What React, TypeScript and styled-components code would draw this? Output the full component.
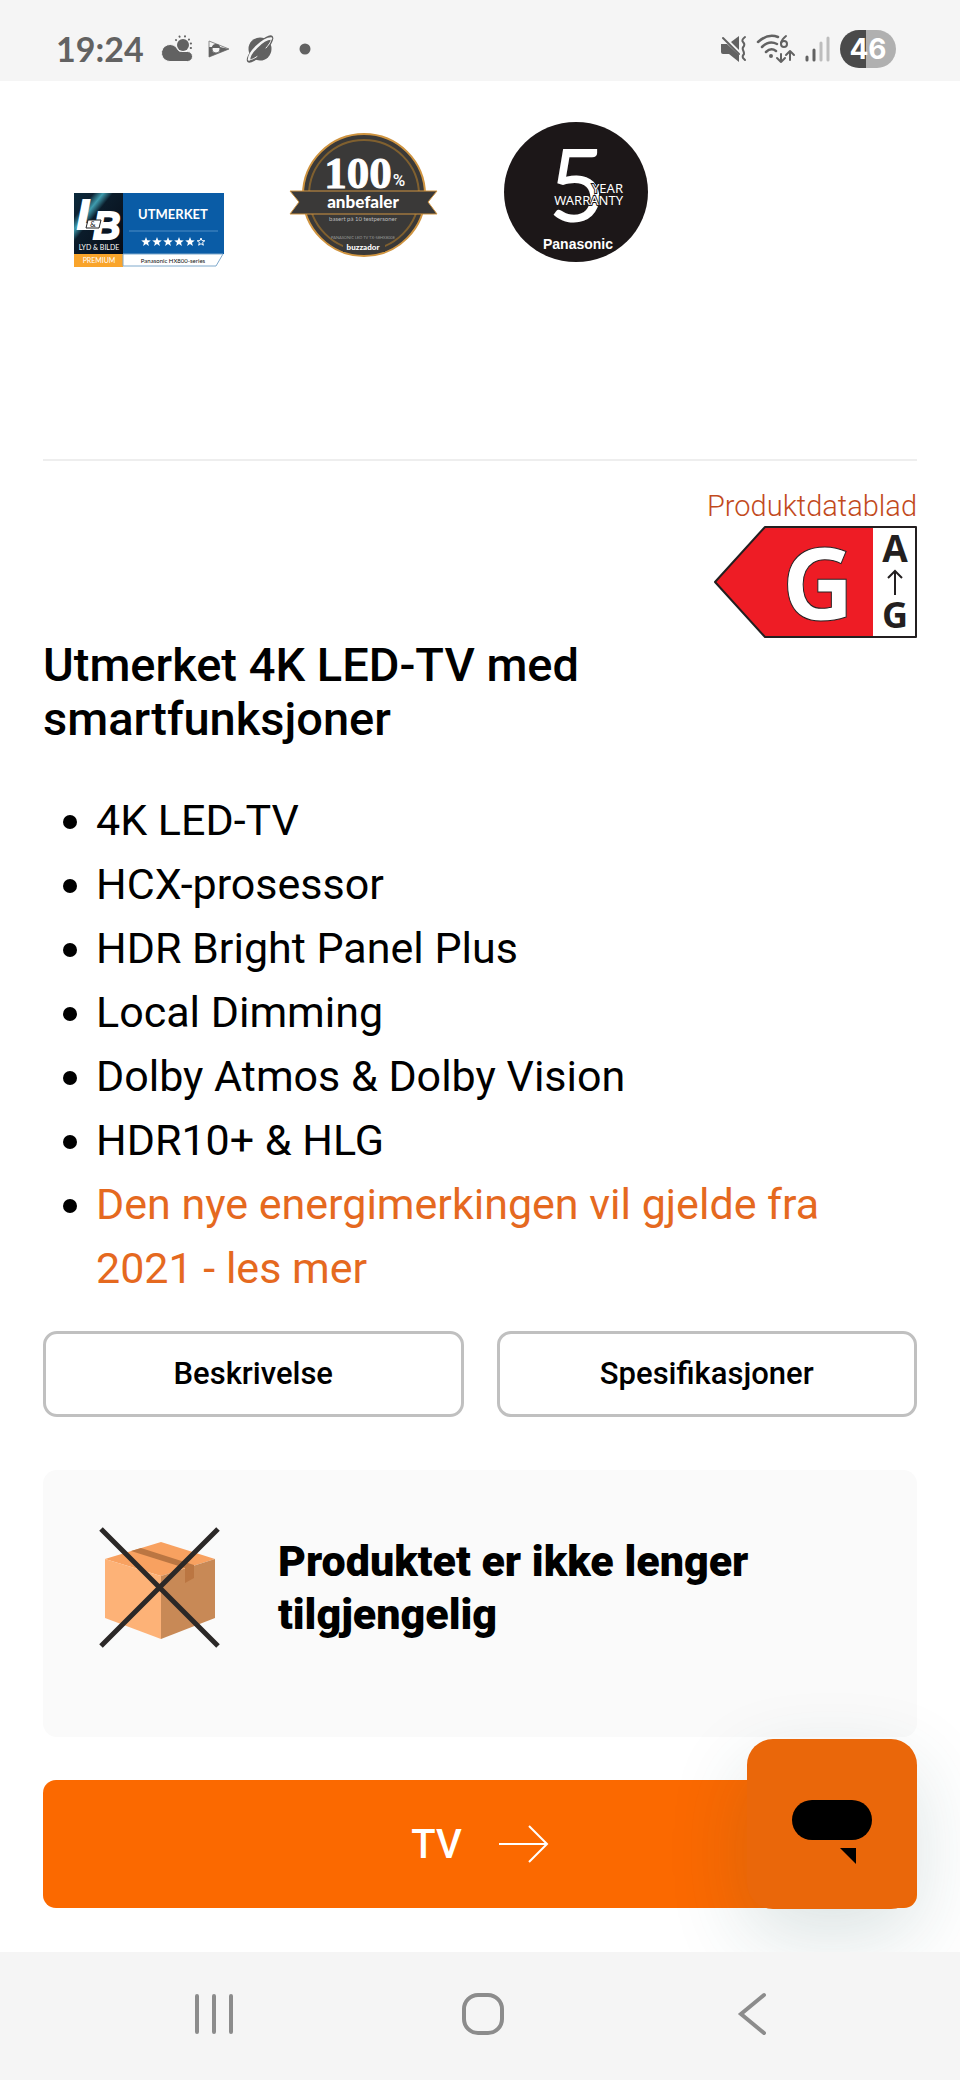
import React from "react";
import styled, { createGlobalStyle } from "styled-components";

const GlobalStyle = createGlobalStyle`
  * { box-sizing: border-box; }
  body {
    margin: 0;
    background: #fff;
    color: #000;
    font-family: Roboto, "Liberation Sans", sans-serif;
  }
  svg { display: block; flex: none; overflow: visible; }
`;

const Screen = styled.div`
  display: flex;
  flex-direction: column;
  min-height: 100vh;
`;

const StatusBar = styled.header`
  display: flex;
  align-items: center;
  justify-content: space-between;
  padding: 16px 64px 0 56px;
  height: 81px;
  background: #f5f5f5;
  color: #626262;
`;

const StatusGroup = styled.div<{ $gap: number }>`
  display: flex;
  align-items: center;
  gap: ${(p) => p.$gap}px;
`;

const Clock = styled.time`
  font: 700 34px/40px Lato, sans-serif;
  margin-right: 4px;
`;

const Battery = styled.span`
  display: flex;
  align-items: center;
  justify-content: center;
  width: 56px;
  height: 38px;
  border-radius: 19px;
  background: linear-gradient(90deg, #4a4a4a 46%, #b0b0b0 46%);
  color: #fff;
  font: 700 28px/38px Inter, sans-serif;
`;

const Main = styled.main`
  position: relative;
  flex: 1;
  padding: 0 43px 44px;
  overflow: hidden;
`;

const Badges = styled.section`
  display: flex;
  gap: 64px;
  padding: 37px 31px 191px;
  border-bottom: 2px solid #eee;
`;

const Energy = styled.section`
  display: flex;
  flex-direction: column;
  align-items: flex-end;
  gap: 2px;
  padding-top: 27px;
`;

const SheetLink = styled.a`
  color: #c24a1d;
  font-size: 29px;
  line-height: 36px;
  font-weight: 300;
  text-decoration: none;
`;

const Title = styled.h1`
  max-width: 640px;
  margin: 0 0 42px;
  font-size: 47px;
  line-height: 54px;
  font-weight: 500;
`;

const Features = styled.ul`
  margin: 0 0 31px;
  padding: 0;
  list-style: none;
  font-size: 43px;
  line-height: 64px;
  font-weight: 400;
`;

const Feature = styled.li`
  display: flex;
  gap: 19px;
  padding-left: 20px;

  &::before {
    content: "";
    flex: none;
    width: 14px;
    height: 14px;
    margin-top: 27px;
    border-radius: 50%;
    background: #000;
  }
`;

const FeatureLink = styled.a`
  max-width: 800px;
  color: #e5691f;
  text-decoration: none;
`;

const Tabs = styled.div`
  display: grid;
  grid-template-columns: 1fr 1fr;
  gap: 33px;
`;

const TabButton = styled.button`
  height: 86px;
  border: 3px solid #c0c0c0;
  border-radius: 14px;
  background: #fff;
  color: #000;
  font: 500 31px/40px Roboto, sans-serif;
`;

const Notice = styled.section`
  display: flex;
  align-items: center;
  gap: 58px;
  margin: 53px 0 43px;
  padding: 57px 57px 89px;
  border-radius: 14px;
  background: #fafafa;
`;

const NoticeText = styled.p`
  max-width: 520px;
  margin: 0;
  font-size: 43px;
  line-height: 53px;
  font-weight: 900;
`;

const CategoryButton = styled.button`
  display: flex;
  align-items: center;
  justify-content: center;
  gap: 37px;
  width: 100%;
  height: 128px;
  padding: 0;
  border: 0;
  border-radius: 13px;
  background: #fb6900;
  color: #fff;
  font: 500 40px/53px Roboto, sans-serif;
`;

const ChatButton = styled.button`
  position: absolute;
  right: 43px;
  bottom: 43px;
  display: grid;
  place-items: center;
  width: 170px;
  height: 170px;
  padding: 16px 0 0;
  border: 0;
  border-radius: 26px;
  background: #ea670a;
  box-shadow: 0 28px 80px rgba(30, 80, 80, 0.16);
`;

const NavBar = styled.nav`
  display: flex;
  align-items: center;
  justify-content: space-between;
  height: 128px;
  padding: 0 186px 4px 192px;
  background: #f5f5f5;
`;

const NavButton = styled.button`
  display: grid;
  place-items: center;
  padding: 0;
  border: 0;
  background: none;
`;

const WeatherIcon = () => (
  <svg width="31" height="30" viewBox="0 0 31 30" fill="#626262">
    <circle cx="21" cy="11" r="6" />
    <path
      d="M14 6l.1.1M17.500 2.500l.1.3M23 2.300l0 .3M27 5.500l-.1.1M29 9.500h-.2M29 14h-.3"
      stroke="#626262"
      strokeWidth="2"
      strokeLinecap="round"
    />
    <path
      d="M8 27.500a8.500 8.500 0 1 1 7.500-12.500c1 1.800 2 2.500 4 2.500h6a5 5 0 0 1 0 10z"
      stroke="#f5f5f5"
      strokeWidth="1"
    />
  </svg>
);

const PlayIcon = () => (
  <svg width="24" height="20" viewBox="0 0 24 20">
    <path d="M2 2L22 10L2 18Z" fill="#f5f5f5" stroke="#8a8a8a" />
    <path d="M2 8L7 8L7 12L12 12L13 8L22 10L2 18Z" fill="#626262" />
    <circle cx="9" cy="10" r="4" fill="#f5f5f5" stroke="#777" />
    <path d="M5 9a4 4 0 0 1 8 0z" fill="#626262" />
  </svg>
);

const PlanetIcon = () => (
  <svg width="30" height="30" viewBox="0 0 30 30">
    <circle cx="15" cy="15" r="11.500" fill="#626262" />
    <ellipse cx="15" cy="15" rx="18" ry="6" transform="rotate(-46 15 15)" fill="#626262" />
    <path
      d="M4 25.500C4 22 7 17.500 11.500 13C16 8.500 21.500 4.500 26 4.500"
      fill="none"
      stroke="#f5f5f5"
      strokeWidth="2.500"
      strokeLinecap="round"
    />
    <path
      d="M26 4.500C26.500 7 24.500 10 21 14M4 25.500C5.500 26.500 9 24.500 12 22.500"
      fill="none"
      stroke="#f5f5f5"
      strokeLinecap="round"
    />
  </svg>
);

const DotIcon = styled.svg`
  margin-left: 10px;
`;

const MoreDot = () => (
  <DotIcon width="12" height="12" viewBox="0 0 12 12">
    <circle cx="6" cy="6" r="5.500" fill="#626262" />
  </DotIcon>
);

const MuteIcon = () => (
  <svg width="27" height="28" viewBox="0 0 27 28">
    <path d="M19 1V15L11 7Z" fill="#626262" />
    <path d="M1 9h6L19 20v7L9 19H3q-2 0-2-2z" fill="#626262" />
    <path d="M3 3L19 19" stroke="#626262" strokeWidth="2" strokeLinecap="round" />
    <path
      d="M25 2q-4 3-2 5t1 4q-2 2-1 4t1 4q-2 2-1 4l2 2"
      fill="none"
      stroke="#626262"
      strokeWidth="2"
      strokeLinecap="round"
    />
  </svg>
);

const WifiIcon = () => (
  <svg
    width="38"
    height="30"
    viewBox="1 0 38 30"
    fill="none"
    stroke="#626262"
    strokeLinecap="round"
    strokeLinejoin="round"
    strokeWidth="2"
  >
    <path d="M2 8Q12-1 22 3M6 13Q13 6 21 10M10 18Q15 13 20 17" strokeWidth="2.500" />
    <circle cx="15" cy="22" r="1" fill="#626262" />
    <path d="M25 20v8m-4-4l4 4l4-4M34 26v-9m-4 4l4-4l4 4" />
    <path d="M30 2Q26 5 25 9" />
    <circle cx="28" cy="10" r="3" />
  </svg>
);

const SignalIcon = () => (
  <svg width="25" height="28" viewBox="0 0 25 28" strokeWidth="3" strokeLinecap="round">
    <path d="M2 22v3M9 15v10" stroke="#626262" />
    <path d="M16 8v17M23 3v22" stroke="#bdbdbd" />
  </svg>
);

const star = (cx: number, cy: number, r: number) =>
  Array.from({ length: 10 }, (_, i) => {
    const a = (Math.PI / 5) * i - Math.PI / 2;
    const d = i % 2 ? r * 0.42 : r;
    return `${cx + Math.cos(a) * d},${cy + Math.sin(a) * d}`;
  }).join(" ");

const LydBildeBadge = () => (
  <svg width="150" height="150" viewBox="0 0 150 150" role="img" aria-label="Lyd & Bilde: Utmerket">
    <defs>
      <linearGradient id="beam" x1="0" y1="0" x2="1" y2="1">
        <stop offset="0" stopColor="#0a2a3c" />
        <stop offset="0.2" stopColor="#0d2232" />
        <stop offset="0.3" stopColor="#3f9cae" />
        <stop offset="0.4" stopColor="#0b1c2b" />
        <stop offset="1" stopColor="#060b16" />
      </linearGradient>
    </defs>
    <rect y="75" width="49" height="61" fill="url(#beam)" />
    <rect x="49" y="75" width="101" height="61" fill="#0a5ca6" />
    <rect y="136" width="49" height="13" fill="#f9a42b" />
    <path d="M49 136H149L142 148H49Z" fill="#fff" stroke="#7fa9cc" />
    <g fontFamily="Lato, sans-serif" fill="#fff">
      <g fontFamily="Liberation Sans, sans-serif" fontWeight="700" fontStyle="italic" stroke="#fff" strokeWidth="2">
        <text x="3" y="111" fontSize="42">L</text>
        <text x="19" y="121" fontSize="38">B</text>
      </g>
      <path d="M14 102H27L25 110H12Z" fill="#fff" stroke="#222" />
      <text x="16" y="109" fontSize="8" fill="#111">&amp;</text>
      <text x="25" y="132" fontSize="7" textAnchor="middle">LYD &amp; BILDE</text>
      <text x="25" y="145" fontSize="7" textAnchor="middle">PREMIUM</text>
      <text x="99" y="101" fontSize="13" fontWeight="700" textAnchor="middle">UTMERKET</text>
      <text x="99" y="145" fontSize="6" textAnchor="middle" fill="#111">Panasonic HX800-series</text>
    </g>
    <path d="M55 113H144" stroke="#4d8cc4" />
    {[72, 83, 94, 105, 116].map((x) => (
      <polygon key={x} points={star(x, 124, 5)} fill="#fff" />
    ))}
    <polygon points={star(127, 124, 4)} fill="none" stroke="#fff" />
  </svg>
);

const BuzzadorBadge = () => (
  <svg width="150" height="150" viewBox="0 0 150 150" role="img" aria-label="100% anbefaler, buzzador">
    <circle cx="76" cy="77" r="61" fill="#3a3938" stroke="#cf9440" strokeWidth="2" />
    <circle cx="76" cy="77" r="55" fill="none" stroke="#80602f" strokeWidth="2" />
    <path d="M2 73H149L140 84L149 96H2L11 84Z" fill="#3a3938" stroke="#cf9440" />
    <rect x="55" y="122" width="42" height="12" fill="#3a3938" />
    <g fill="#fff" textAnchor="middle" fontFamily="Lato, sans-serif">
      <text x="70" y="70" fontSize="45" fontWeight="700" fontFamily="Liberation Sans Narrow" stroke="#fff">
        100
      </text>
      <text x="111" y="68" fontSize="17" fontFamily="Roboto" fontWeight="500">
        %
      </text>
      <text x="75" y="90" fontSize="17" fontWeight="900">anbefaler</text>
      <text x="75" y="103" fontSize="6" fill="#bbb">basert på 10 testpersoner</text>
      <text x="75" y="121" fontSize="4" fill="#999">PANASONIC LED TV TX-58HX800E</text>
      <text x="75" y="132" fontSize="8" fontWeight="900">buzzador</text>
    </g>
  </svg>
);

const WarrantyBadge = () => (
  <svg width="150" height="150" viewBox="0 0 150 150" role="img" aria-label="Panasonic 5 year warranty">
    <ellipse cx="74" cy="74" rx="72" ry="70" fill="#1c1718" />
    <g fill="#fff">
      <text x="46" y="104" fontSize="100" fontFamily="Lato">5</text>
      <g fontFamily="Noto Sans, sans-serif" fontSize="13" stroke="#1c1718" strokeWidth="2" paintOrder="stroke">
        <text x="121" y="75" textAnchor="end">YEAR</text>
        <text x="121" y="87" textAnchor="end">WARRANTY</text>
      </g>
      <text x="76" y="131" fontSize="14" fontWeight="700" fontFamily="Liberation Sans" textAnchor="middle">
        Panasonic
      </text>
    </g>
  </svg>
);

const EnergyLabel = () => (
  <svg width="204" height="112" viewBox="0 0 204 112" role="img" aria-label="Energiklasse G">
    <path d="M2 56L52 1H203V111H52Z" fill="#ee1c25" />
    <rect x="160" y="1" width="43" height="110" fill="#fff" />
    <path d="M2 56L52 1H203V111H52Z" fill="none" stroke="#231f20" strokeWidth="2" strokeLinejoin="round" />
    <g fontFamily="Open Sans, sans-serif" fontWeight="700" textAnchor="middle" fill="#231f20">
      <text x="105" y="94" fontSize="100" fill="#fff" stroke="#231f20">
        G
      </text>
      <text x="182" y="36" fontSize="37">A</text>
      <text x="182" y="102" fontSize="36">G</text>
    </g>
    <path d="M182 69V45M175 52L182 45L189 52" fill="none" stroke="#231f20" strokeWidth="2" />
  </svg>
);

const BoxIcon = () => (
  <svg width="120" height="121" viewBox="0 0 120 121">
    <path d="M5 32L61 15L115 32L61 49Z" fill="#f8a160" />
    <path d="M5 32L61 49V112L5 91Z" fill="#fdb277" />
    <path d="M115 32L61 49V112L115 91Z" fill="#c88956" />
    <path d="M31 24L41 21L94 38V51L85 56V41Z" fill="#bb7642" />
    <path d="M1 2L118 119M118 2L1 119" stroke="#2b2827" strokeWidth="5" />
  </svg>
);

const ArrowIcon = () => (
  <svg width="50" height="40" viewBox="0 0 50 40" fill="none" stroke="#fff" strokeWidth="2">
    <path d="M0 20H48M30 2L48 20L30 38" />
  </svg>
);

const ChatIcon = () => (
  <svg width="80" height="64" viewBox="0 0 80 64">
    <rect width="80" height="40" rx="20" />
    <path d="M48 48H64V64Z" />
  </svg>
);

const features = [
  "4K LED-TV",
  "HCX-prosessor",
  "HDR Bright Panel Plus",
  "Local Dimming",
  "Dolby Atmos & Dolby Vision",
  "HDR10+ & HLG",
];

export default function App() {
  return (
    <Screen>
      <GlobalStyle />
      <StatusBar>
        <StatusGroup $gap={14}>
          <Clock>19:24</Clock>
          <WeatherIcon />
          <PlayIcon />
          <PlanetIcon />
          <MoreDot />
        </StatusGroup>
        <StatusGroup $gap={10}>
          <MuteIcon />
          <WifiIcon />
          <SignalIcon />
          <Battery>46</Battery>
        </StatusGroup>
      </StatusBar>
      <Main>
        <Badges>
          <LydBildeBadge />
          <BuzzadorBadge />
          <WarrantyBadge />
        </Badges>
        <Energy>
          <SheetLink href="#produktdatablad">Produktdatablad</SheetLink>
          <EnergyLabel />
        </Energy>
        <Title>Utmerket 4K LED-TV med smartfunksjoner</Title>
        <Features>
          {features.map((f) => (
            <Feature key={f}>{f}</Feature>
          ))}
          <Feature>
            <FeatureLink href="#energimerking">Den nye energimerkingen vil gjelde fra 2021 - les mer</FeatureLink>
          </Feature>
        </Features>
        <Tabs>
          <TabButton>Beskrivelse</TabButton>
          <TabButton>Spesifikasjoner</TabButton>
        </Tabs>
        <Notice>
          <BoxIcon />
          <NoticeText>Produktet er ikke lenger tilgjengelig</NoticeText>
        </Notice>
        <CategoryButton>
          TV
          <ArrowIcon />
        </CategoryButton>
        <ChatButton aria-label="Chat">
          <ChatIcon />
        </ChatButton>
      </Main>
      <NavBar>
        <NavButton aria-label="Siste apper">
          <svg width="44" height="44" viewBox="0 0 44 44" stroke="#8c8c8c" strokeWidth="4" strokeLinecap="round">
            <path d="M5 4V40M22 4V40M39 4V40" />
          </svg>
        </NavButton>
        <NavButton aria-label="Hjem">
          <svg width="44" height="44" viewBox="0 0 44 44" fill="none" stroke="#8c8c8c" strokeWidth="4">
            <rect x="3" y="3" width="38" height="38" rx="14" />
          </svg>
        </NavButton>
        <NavButton aria-label="Tilbake">
          <svg width="44" height="44" viewBox="0 0 44 44" fill="none" stroke="#8c8c8c" strokeWidth="4" strokeLinecap="round">
            <path d="M34 3L11 22L34 41" />
          </svg>
        </NavButton>
      </NavBar>
    </Screen>
  );
}
